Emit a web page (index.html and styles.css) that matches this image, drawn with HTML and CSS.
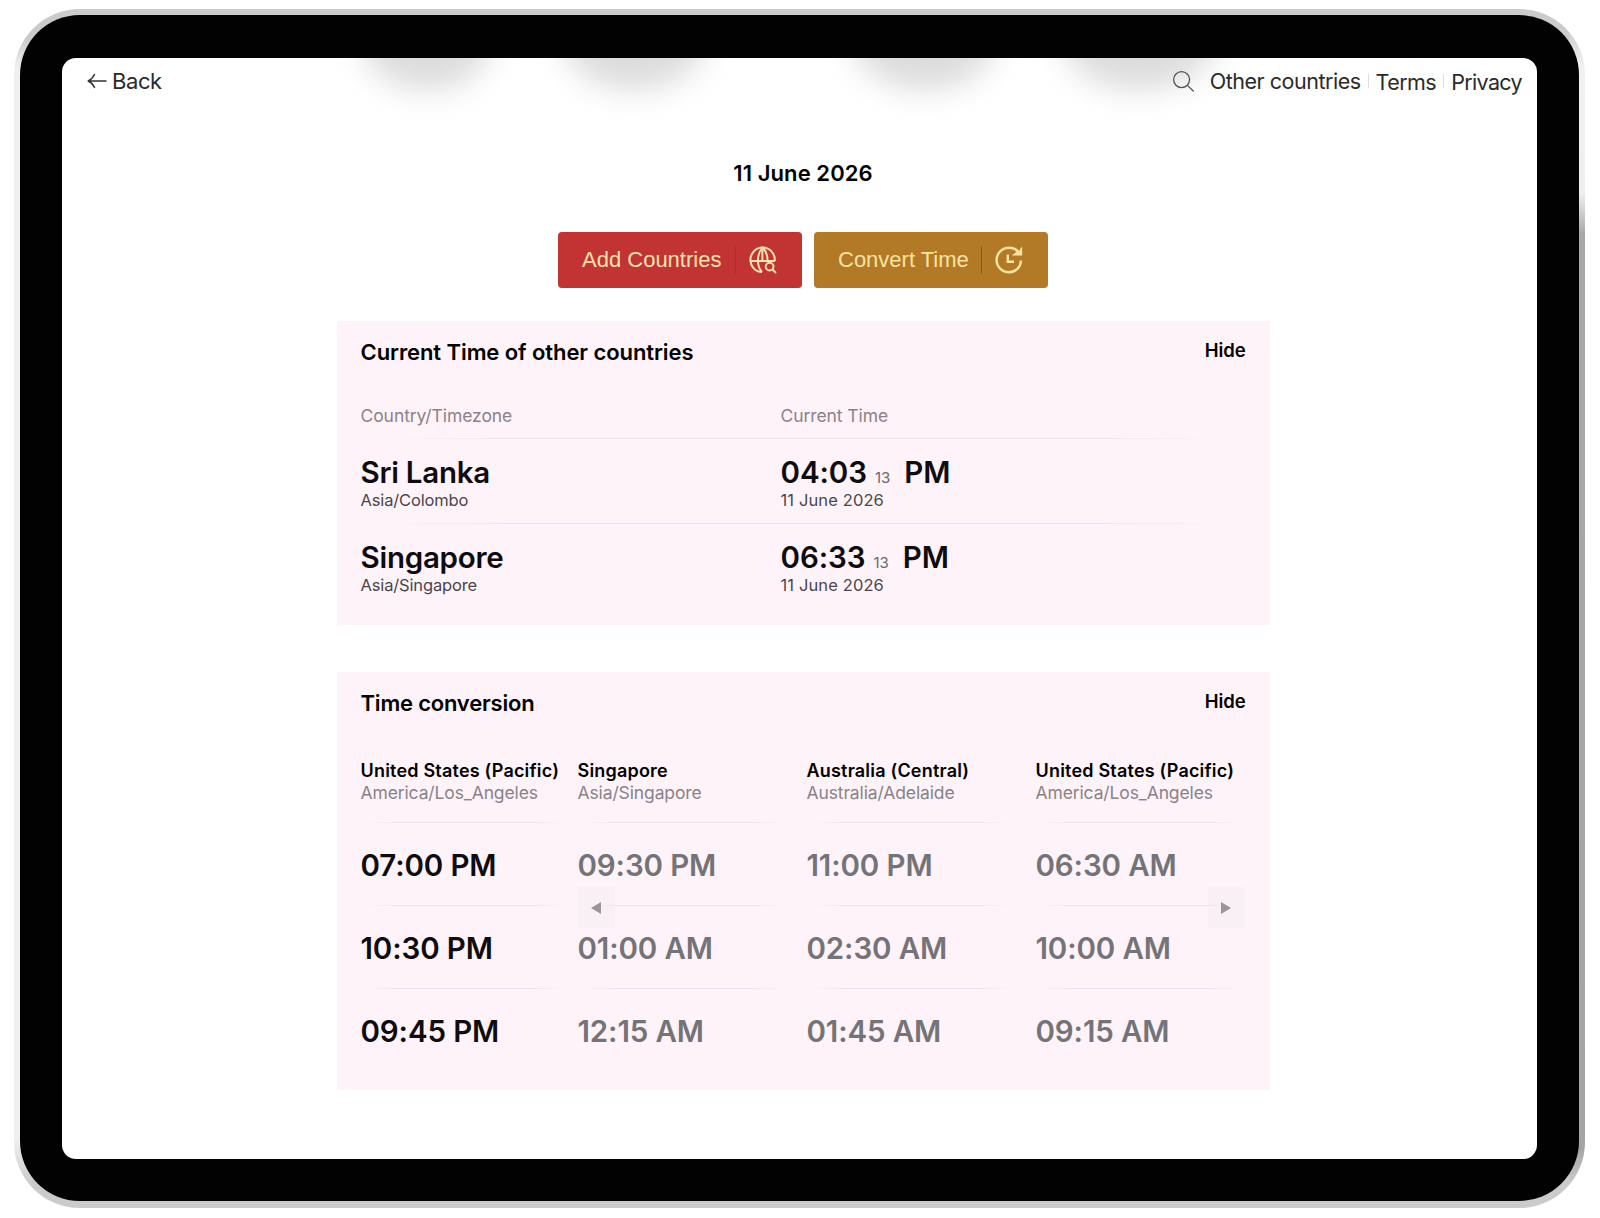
FILE: index.html
```
<!DOCTYPE html>
<html>

<head>
  <meta charset="UTF-8">
  <title>Time Converter</title>
  <link rel="stylesheet" href="styles.css">
</head>

<body>

  <div class="device">
    <div class="bezel">
      <div class="screen">
        <div class="shadows">
          <div class="blob blob1"></div>
          <div class="blob blob2"></div>
          <div class="blob blob3"></div>
          <div class="blob blob4"></div>
        </div>

        <div class="topbar">
          <a class="back">
            <svg width="20" height="16" viewBox="0 0 20 16" fill="none" stroke="#333" stroke-width="1.5" stroke-linecap="round" stroke-linejoin="round">
              <path d="M19 8H1.5M7.5 1.5C6 4.5 4 6.8 1.2 8C4 9.2 6 11.5 7.5 14.5" />
            </svg>
            <span class="back_text">Back</span>
          </a>
          <div class="links">
            <svg class="search" width="23" height="23" viewBox="0 0 23 23" fill="none" stroke="#555" stroke-width="1.3" stroke-linecap="round">
              <circle cx="9.6" cy="9.6" r="8" />
              <path d="M15.4 15.4L21.3 21" />
            </svg>
            <a class="link other">Other countries</a>
            <span class="bar"></span>
            <a class="link terms">Terms</a>
            <span class="bar"></span>
            <a class="link privacy">Privacy</a>
          </div>
        </div>

        <div class="content">
          <div class="date">11 June 2026</div>

          <div class="buttons">
            <div class="button add">
              <span>Add Countries</span>
              <span class="divider"></span>
              <svg width="28" height="28" viewBox="0 0 28 28" fill="none" stroke="#fde2ae" stroke-width="2">
                <path d="M13 26C6.5 26 1.4 20.4 1.4 13.8S6.8 1.6 13.6 1.6C20.4 1.6 25.8 7 25.8 13.8V15" />
                <path d="M13 26C7.5 20 7.5 8 13.6 1.6C17.2 5 18.6 9.5 18.5 15" />
                <path d="M13.4 1.6V15M1.4 15H26" />
                <circle cx="20.6" cy="20.6" r="3.9" />
                <path d="M23.4 23.4L27 27" />
              </svg>
            </div>
            <div class="button convert">
              <span>Convert Time</span>
              <span class="divider"></span>
              <svg width="28" height="28" viewBox="0 0 28 28" fill="none" stroke="#fbe3a0" stroke-width="2.4">
                <path d="M26 14.5C25.7 21.3 20.5 26.3 14 26.3C7.1 26.3 1.6 20.8 1.6 14S7.1 1.7 14 1.7C18.3 1.7 21.7 3.6 24 6.5" />
                <path d="M26.6 1.5V9H18.5L21.5 6.5L24.5 6Z" fill="#fbe3a0" stroke-width="1.2" />
                <path d="M12.8 8.5V15.8H19" />
              </svg>
            </div>
          </div>

          <div class="panel current">
            <div class="panel_header">
              <div class="title">Current Time of other countries</div>
              <a class="hide">Hide</a>
            </div>
            <div class="heads fade">
              <div>Country/Timezone</div>
              <div>Current Time</div>
            </div>
            <div class="row fade">
              <div>
                <div class="name">Sri Lanka</div>
                <div class="zone">Asia/Colombo</div>
              </div>
              <div>
                <div class="clock">04:03<span class="seconds">13</span>PM</div>
                <div class="zone day">11 June 2026</div>
              </div>
            </div>
            <div class="row">
              <div>
                <div class="name">Singapore</div>
                <div class="zone">Asia/Singapore</div>
              </div>
              <div>
                <div class="clock">06:33<span class="seconds">13</span>PM</div>
                <div class="zone day">11 June 2026</div>
              </div>
            </div>
          </div>

          <div class="panel conversion">
            <div class="panel_header">
              <div class="title conversion_title">Time conversion</div>
              <a class="hide">Hide</a>
            </div>
            <div class="columns">
              <div class="column base">
                <div class="place fade">
                  <div class="country">United States (Pacific)</div>
                  <div class="timezone">America/Los_Angeles</div>
                </div>
                <div class="time fade">07:00 PM</div>
                <div class="time fade">10:30 PM</div>
                <div class="time">09:45 PM</div>
              </div>
              <div class="scroller">
                <div class="column">
                  <div class="place fade">
                    <div class="country">Singapore</div>
                    <div class="timezone">Asia/Singapore</div>
                  </div>
                  <div class="time fade">09:30 PM</div>
                  <div class="time fade">01:00 AM</div>
                  <div class="time">12:15 AM</div>
                </div>
                <div class="column">
                  <div class="place fade">
                    <div class="country">Australia (Central)</div>
                    <div class="timezone">Australia/Adelaide</div>
                  </div>
                  <div class="time fade">11:00 PM</div>
                  <div class="time fade">02:30 AM</div>
                  <div class="time">01:45 AM</div>
                </div>
                <div class="column">
                  <div class="place fade">
                    <div class="country">United States (Pacific)</div>
                    <div class="timezone">America/Los_Angeles</div>
                  </div>
                  <div class="time fade">06:30 AM</div>
                  <div class="time fade">10:00 AM</div>
                  <div class="time">09:15 AM</div>
                </div>
                <div class="arrow prev">
                  <svg width="10" height="12" viewBox="0 0 10 12"><path d="M10 0V12L0 6Z" fill="#9d939b" /></svg>
                </div>
                <div class="arrow next">
                  <svg width="10" height="12" viewBox="0 0 10 12"><path d="M0 0V12L10 6Z" fill="#9d939b" /></svg>
                </div>
              </div>
            </div>
          </div>
        </div>
      </div>
    </div>
  </div>

</body>

</html>
```
FILE: styles.css
```
:root {
  --panel: #fef3f9;
  --red: #c23334;
  --gold: #b27927;
}

body {
  margin: 0;
  background: #fff;
  color: #000;
  font-family: Inter, "Liberation Sans", sans-serif;
  overflow: hidden;
}

/* the metal edge catches light on the left and upper right */
.device {
  box-sizing: border-box;
  width: 1571px;
  height: 1199px;
  margin: 9px 0 0 14px;
  padding: 6px 6px 7px;
  border-radius: 66px;
  background:
    linear-gradient(rgba(240, 240, 240, 0) 20px, #f0f0f0 55px, #eee 185px, #a8a8a8 225px, #a5a5a5 1140px, rgba(165, 165, 165, 0) 1175px) right / 16px 100% no-repeat,
    linear-gradient(rgba(240, 240, 240, 0) 30px, #f0f0f0 58px, #f0f0f0 1130px, rgba(240, 240, 240, 0) 1175px) left / 18px 100% no-repeat,
    #cbcbcb;
}

.bezel {
  box-sizing: border-box;
  width: 1559px;
  height: 1186px;
  padding: 43px 42px 42px;
  border-radius: 60px;
  background: #020202;
}

.screen {
  position: relative;
  width: 1475px;
  height: 1101px;
  border-radius: 14px;
  background: #fff;
  overflow: hidden;
}

/* soft shadows falling in from above the screen */
.shadows {
  position: absolute;
  top: 0;
  left: 0;
  width: 100%;
  height: 80px;
}

.blob {
  position: absolute;
  top: -76px;
  width: 145px;
  height: 108px;
  border-radius: 50%;
  background: #dcdcdc;
  filter: blur(15px);
}

.blob1 { left: 299px; width: 132px; }
.blob2 { left: 500px; }
.blob3 { left: 790px; }
.blob4 { left: 1000px; width: 155px; }

.topbar {
  position: relative;
  display: flex;
  justify-content: space-between;
  align-items: center;
  height: 46px;
  padding: 0 15px 0 25px;
}

.back,
.links {
  display: flex;
  align-items: center;
  font-size: 21.5px;
  line-height: 30px;
  letter-spacing: -0.55px;
  color: #2a2a2a;
}

.back {
  gap: 5px;
  font-size: 22px;
  letter-spacing: -0.4px;
}

.link {
  white-space: nowrap;
}

.other {
  letter-spacing: -0.48px;
}

.search {
  margin-right: 15px;
}

.bar {
  width: 1px;
  height: 14px;
  margin: 0 7px;
  background: #ddd;
}

.terms,
.privacy {
  padding-top: 2px;
}

.privacy {
  letter-spacing: -0.65px;
}

/* nudges the column right of the screen's centre */
.content {
  padding-left: 7px;
}

.date {
  margin-top: 54px;
  font-size: 22px;
  font-weight: 600;
  line-height: 30px;
  letter-spacing: 0.08px;
  text-align: center;
}

.buttons {
  display: flex;
  justify-content: center;
  gap: 12px;
  margin-top: 44px;
}

.button {
  box-sizing: border-box;
  display: flex;
  align-items: center;
  justify-content: space-between;
  height: 56px;
  padding: 0 25px 0 24px;
  border-radius: 4px;
  font-family: "Liberation Sans", Arial, sans-serif;
  font-size: 22px;
  white-space: nowrap;
}

.add {
  width: 244px;
  background: var(--red);
  color: #fde2ae;
}

.convert {
  width: 234px;
  background: var(--gold);
  color: #fbe3a0;
}

.divider {
  width: 1px;
  height: 28px;
  background: rgba(70, 20, 0, 0.35);
}

.add .divider {
  background: rgba(70, 20, 0, 0.15);
}

.panel {
  box-sizing: border-box;
  width: 933px;
  margin: 33px auto 0;
  padding: 15px 24px 0;
  background: var(--panel);
}

.current {
  height: 304px;
}

.conversion {
  height: 418px;
  margin-top: 47px;
}

.panel_header {
  display: flex;
  justify-content: space-between;
  height: 33px;
  line-height: 32px;
  font-weight: 600;
}

.title {
  font-size: 22px;
  letter-spacing: -0.08px;
}

.conversion_title {
  letter-spacing: -0.2px;
}

.hide {
  font-size: 18.5px;
  line-height: 29px;
  letter-spacing: -0.1px;
}

/* hairline under a cell, fading out at both ends */
.fade {
  background: linear-gradient(90deg, transparent 3%, #ece2e8 18%, #ece2e8 82%, transparent 97%) bottom / 100% 1px no-repeat;
}

.heads {
  box-sizing: border-box;
  display: grid;
  grid-template-columns: 420px 1fr;
  align-items: end;
  height: 70px;
  padding-bottom: 12px;
  font-size: 17.5px;
  line-height: 22px;
  letter-spacing: -0.08px;
  color: #8a8288;
}

.row {
  box-sizing: border-box;
  display: grid;
  grid-template-columns: 420px 1fr;
  height: 84.5px;
  padding-top: 17px;
}

.name,
.clock {
  height: 33px;
  font-size: 29.5px;
  font-weight: 600;
  line-height: 33px;
  letter-spacing: -0.25px;
  color: #0e0c0f;
}

.clock {
  letter-spacing: -0.05px;
}

.zone {
  font-size: 16.5px;
  line-height: 22px;
  letter-spacing: -0.15px;
  color: #4b464a;
}

.day {
  letter-spacing: 0.12px;
}

.seconds {
  margin: 0 14px 0 8px;
  font-size: 15px;
  font-weight: 400;
  color: #6d676b;
}

.columns {
  display: flex;
  gap: 8px;
}

.scroller {
  position: relative;
  display: flex;
  gap: 20px;
}

.column {
  width: 209px;
}

.place {
  box-sizing: border-box;
  height: 103px;
  padding-top: 40px;
  line-height: 22px;
  white-space: nowrap;
}

.country {
  font-size: 18px;
  font-weight: 600;
  letter-spacing: 0.2px;
}

.timezone {
  font-size: 17.5px;
  letter-spacing: -0.12px;
  color: #8a8288;
}

.time {
  box-sizing: border-box;
  height: 83px;
  padding-top: 3px;
  font-size: 29.5px;
  font-weight: 600;
  line-height: 79px;
  letter-spacing: -0.12px;
  white-space: nowrap;
  color: #747478;
}

.base .time {
  color: #0e0c0f;
}

.arrow {
  position: absolute;
  top: 167px;
  display: flex;
  align-items: center;
  justify-content: center;
  width: 37px;
  height: 41px;
  background: rgba(243, 234, 240, 0.4);
}

.prev { left: 0; }
.next { right: 0; }
```
